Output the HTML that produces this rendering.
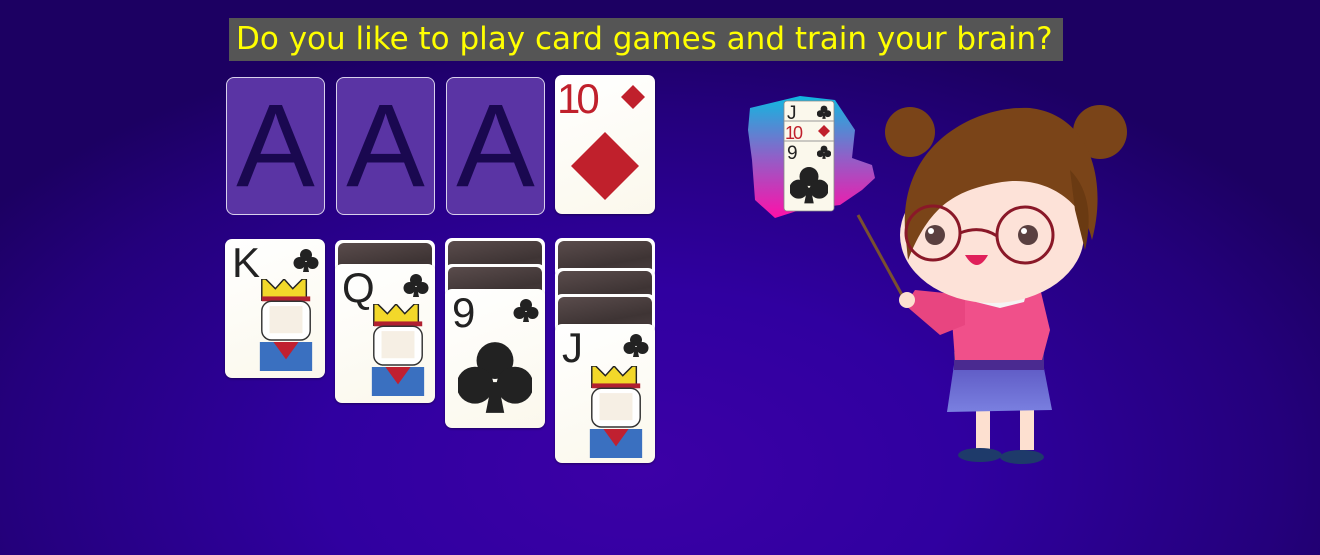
<!DOCTYPE html>
<html><head><meta charset="utf-8"><style>
html,body{margin:0;padding:0}
body{width:1320px;height:555px;overflow:hidden;position:relative;
background:radial-gradient(ellipse 800px 450px at 640px 470px,#3c00a6 0%,#3000a0 40%,#24007c 80%,#1c0062 100%);
font-family:"DejaVu Sans","Liberation Sans",sans-serif}
.title{position:absolute;left:229px;top:18px;width:827px;padding-left:7px;height:43px;background:#555;color:#ffff00;font-size:31px;line-height:43px;white-space:nowrap}
.slot{position:absolute;width:97px;height:136px;border:1.5px solid #d8d0ec;border-radius:8px;background:#5a34a4;color:#1a0850;font-family:"Liberation Sans",sans-serif;font-size:118px;text-align:center;line-height:136px}
.card{position:absolute;width:100px;height:139px;border-radius:7px;background:linear-gradient(160deg,#fff 0%,#fbf8ec 100%);box-shadow:0 1px 2px rgba(0,0,0,.4);overflow:hidden}
.back{position:absolute;width:100px;height:40px;border-radius:7px;background:#fff;}
.back::after{content:"";position:absolute;left:3px;right:3px;top:3px;bottom:0;border-radius:6px 6px 0 0;background:linear-gradient(170deg,#5a4c4c,#3e3434 60%,#4c4040)}
.rk{position:absolute;left:7px;top:0px;font-family:"Liberation Sans",sans-serif;font-size:42px;color:#222}
</style></head><body>
<div class="title">Do you like to play card games and train your brain?</div>

<div class="slot" style="left:226px;top:77px">A</div>
<div class="slot" style="left:336px;top:77px">A</div>
<div class="slot" style="left:446px;top:77px">A</div>
<div class="card" style="left:555px;top:75px">
 <div class="rk" style="color:#c0202c;left:2px;letter-spacing:-4px">10</div>
 <svg style="position:absolute;left:64px;top:8px" width="28" height="28" viewBox="0 0 28 28"><path d="M14 2 26 14 14 26 2 14Z" fill="#c0202c"/></svg>
 <svg style="position:absolute;left:14px;top:55px" width="72" height="72" viewBox="0 0 72 72"><path d="M36 2 70 36 36 70 2 36Z" fill="#c0202c"/></svg>
</div>

<svg width="0" height="0" style="position:absolute"><defs>
<g id="club"><circle cx="12" cy="7" r="6"/><circle cx="5.5" cy="15" r="6"/><circle cx="18.5" cy="15" r="6"/><path d="M11 14h2l2 10h-6z"/></g>
<g id="king"><path d="M6 0l10 10 9-10 9 10 10-10 4 0v22H2V0z" fill="#f2d82a" stroke="#222" stroke-width="1.5"/><rect x="2" y="18" width="50" height="5" fill="#b02030"/><rect x="2" y="23" width="50" height="40" rx="10" fill="#fff" stroke="#333" stroke-width="1.5"/><rect x="10" y="28" width="34" height="28" fill="#f6efe4"/><path d="M0 65h54v30H0z" fill="#3a70c0"/><path d="M14 65l13 18 13-18z" fill="#c02030"/></g>
</defs></svg>

<div class="card" style="left:225px;top:239px">
 <div class="rk">K</div>
 <svg width="26" height="26" viewBox="0 0 24 26" style="position:absolute;right:6px;top:9px"><use href="#club" fill="#222"/></svg>
 <svg style="position:absolute;left:33px;top:40px" width="56" height="92" viewBox="0 0 54 95"><use href="#king"/></svg>
</div>
<div class="back" style="left:335px;top:240px"></div>
<div class="card" style="left:335px;top:264px">
 <div class="rk">Q</div>
 <svg width="26" height="26" viewBox="0 0 24 26" style="position:absolute;right:6px;top:9px"><use href="#club" fill="#222"/></svg>
 <svg style="position:absolute;left:35px;top:40px" width="56" height="92" viewBox="0 0 54 95"><use href="#king"/></svg>
</div>
<div class="back" style="left:445px;top:238px"></div>
<div class="back" style="left:445px;top:264px"></div>
<div class="card" style="left:445px;top:289px">
 <div class="rk">9</div>
 <svg width="26" height="26" viewBox="0 0 24 26" style="position:absolute;right:6px;top:9px"><use href="#club" fill="#222"/></svg>
 <svg width="74" height="80" viewBox="0 0 24 26" style="position:absolute;left:13px;top:50px"><use href="#club" fill="#222"/></svg>
</div>
<div class="back" style="left:555px;top:238px"></div>
<div class="back" style="left:555px;top:268px"></div>
<div class="back" style="left:555px;top:294px"></div>
<div class="card" style="left:555px;top:324px">
 <div class="rk">J</div>
 <svg width="26" height="26" viewBox="0 0 24 26" style="position:absolute;right:6px;top:9px"><use href="#club" fill="#222"/></svg>
 <svg style="position:absolute;left:33px;top:42px" width="56" height="92" viewBox="0 0 54 95"><use href="#king"/></svg>
</div>

<svg style="position:absolute;left:740px;top:90px" width="400" height="380" viewBox="0 0 400 380">
 <defs><linearGradient id="pg" x1="0" y1="0" x2="0" y2="1"><stop offset="0" stop-color="#10b8e0"/><stop offset=".5" stop-color="#9060c8"/><stop offset="1" stop-color="#ff10a8"/></linearGradient>
 <linearGradient id="sk" x1="0" y1="0" x2="0" y2="1"><stop offset="0" stop-color="#5a54c0"/><stop offset="1" stop-color="#7a80e0"/></linearGradient></defs>
 <path d="M10 18 60 6 95 10 115 40 112 68 132 75 135 88 122 100 100 115 60 120 35 128 15 110 12 70 8 40Z" fill="url(#pg)"/>
 <rect x="44" y="11" width="50" height="110" rx="3" fill="#fbf8ec" stroke="#888" stroke-width=".8"/>
 <line x1="44" y1="31" x2="94" y2="31" stroke="#999"/><line x1="44" y1="51" x2="94" y2="51" stroke="#999"/>
 <text x="47" y="29" font-family="Liberation Sans" font-size="19" fill="#222">J</text>
 <text x="45" y="49" font-family="Liberation Sans" font-size="18" fill="#c0202c" letter-spacing="-2">10</text>
 <text x="47" y="69" font-family="Liberation Sans" font-size="19" fill="#222">9</text>
 <svg x="77" y="15" width="14" height="15" viewBox="0 0 24 26"><use href="#club" fill="#222"/></svg>
 <path d="M84 35 90 41 84 47 78 41Z" fill="#c0202c"/>
 <svg x="77" y="55" width="14" height="15" viewBox="0 0 24 26"><use href="#club" fill="#222"/></svg>
 <svg x="50" y="75" width="38" height="42" viewBox="0 0 24 26"><use href="#club" fill="#222"/></svg>
 <line x1="118" y1="125" x2="162" y2="205" stroke="#7a5030" stroke-width="3"/>
 <rect x="236" y="310" width="14" height="50" fill="#fde0d0"/><rect x="280" y="310" width="14" height="50" fill="#fde0d0"/>
 <ellipse cx="240" cy="365" rx="22" ry="7" fill="#1e3a6a"/><ellipse cx="282" cy="367" rx="22" ry="7" fill="#1e3a6a"/>
 <path d="M215 268 302 268 312 320 207 322Z" fill="url(#sk)"/>
 <rect x="214" y="262" width="90" height="18" fill="#4a2a90"/>
 <path d="M220 200 300 198 310 240 302 270 215 270 212 230Z" fill="#f0508a"/>
 <path d="M225 205 175 200 165 215 200 245 225 235Z" fill="#e84580"/>
 <circle cx="167" cy="210" r="8" fill="#fde0d0"/>
 <path d="M232 198 260 208 288 198 284 212 260 218 236 212Z" fill="#f4f4f4"/>
 <circle cx="170" cy="42" r="25" fill="#7a4418"/><circle cx="360" cy="42" r="27" fill="#7a4418"/>
 <ellipse cx="252" cy="145" rx="92" ry="68" fill="#fde2d8"/>
 <path d="M165 140 C160 50 240 15 290 18 C350 25 368 90 352 150 C345 115 310 85 262 92 C215 100 190 115 168 170Z" fill="#7a4418"/>
 <path d="M330 80 C350 100 352 130 345 160 L335 120Z" fill="#6a3a12"/>
 <circle cx="193" cy="143" r="27" fill="none" stroke="#8a1828" stroke-width="3"/>
 <circle cx="285" cy="145" r="28" fill="none" stroke="#8a1828" stroke-width="3"/>
 <path d="M220 143 Q240 135 257 146" fill="none" stroke="#8a1828" stroke-width="3"/>
 <circle cx="195" cy="145" r="10" fill="#5a4040"/><circle cx="288" cy="145" r="10" fill="#5a4040"/>
 <circle cx="191" cy="141" r="3" fill="#fff"/><circle cx="284" cy="141" r="3" fill="#fff"/>
 <path d="M225 165 Q237 185 248 165Z" fill="#e0205a"/>
</svg>
</body></html>
